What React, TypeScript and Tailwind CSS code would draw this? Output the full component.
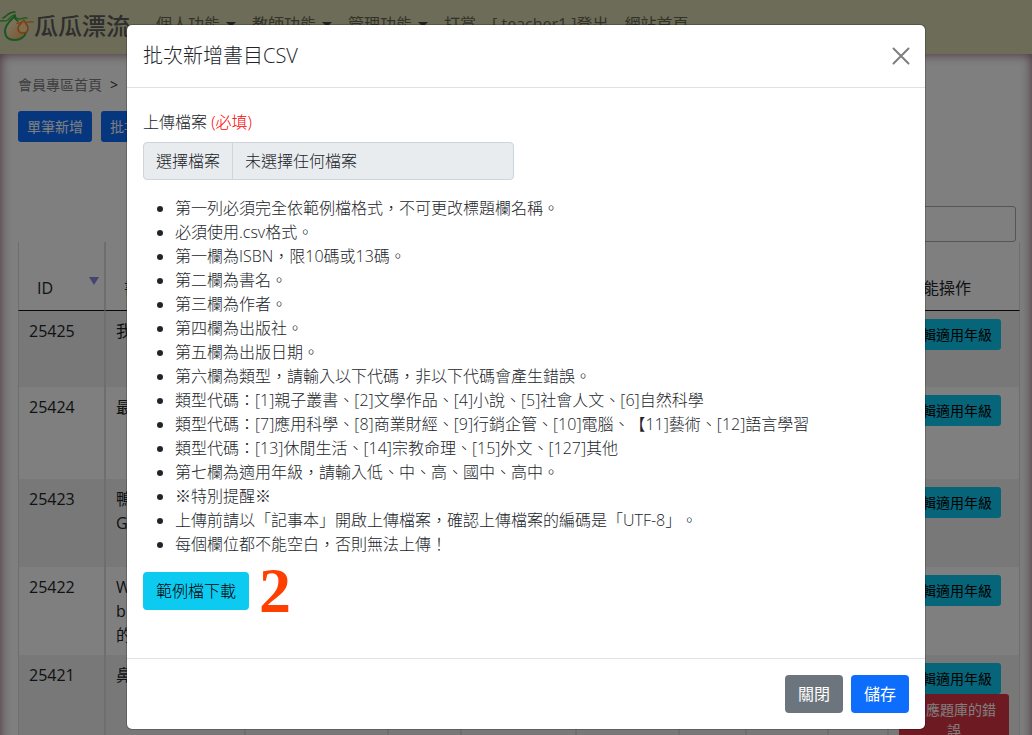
import { useState } from 'react'

const NAV_ITEMS = [
  { label: '個人功能', dropdown: true },
  { label: '教師功能', dropdown: true },
  { label: '管理功能', dropdown: true },
  { label: '打賞', dropdown: false },
  { label: '[ teacher1 ]登出', dropdown: false },
  { label: '網站首頁', dropdown: false },
]

const BOOKS = [
  { id: '25425', title: '我', height: 'h-[76px]' },
  { id: '25424', title: '最', height: 'h-[92px]' },
  { id: '25423', title: '鴨 G', height: 'h-[88px]' },
  { id: '25422', title: 'W b 的', height: 'h-[88px]' },
  { id: '25421', title: '鼻', height: 'h-[92px]', report: true },
]

const RULES = [
  '第一列必須完全依範例檔格式，不可更改標題欄名稱。',
  '必須使用.csv格式。',
  '第一欄為ISBN，限10碼或13碼。',
  '第二欄為書名。',
  '第三欄為作者。',
  '第四欄為出版社。',
  '第五欄為出版日期。',
  '第六欄為類型，請輸入以下代碼，非以下代碼會產生錯誤。',
  '類型代碼：[1]親子叢書、[2]文學作品、[4]小說、[5]社會人文、[6]自然科學',
  '類型代碼：[7]應用科學、[8]商業財經、[9]行銷企管、[10]電腦、【11]藝術、[12]語言學習',
  '類型代碼：[13]休閒生活、[14]宗教命理、[15]外文、[127]其他',
  '第七欄為適用年級，請輸入低、中、高、國中、高中。',
  '※特別提醒※',
  '上傳前請以「記事本」開啟上傳檔案，確認上傳檔案的編碼是「UTF-8」。',
  '每個欄位都不能空白，否則無法上傳！',
]

function Logo() {
  return (
    <svg viewBox="0 0 34 34" className="w-[34px] h-[34px] shrink-0" fill="none" strokeLinecap="round" strokeLinejoin="round" aria-hidden="true">
      <defs>
        <linearGradient id="melon" x1="0" y1="0" x2="1" y2="1">
          <stop offset="0" stopColor="#fffbe0" />
          <stop offset="1" stopColor="#f0a850" />
        </linearGradient>
      </defs>
      {/* big melon */}
      <path d="M14 8C10 12 5 16 5 22c0 6 4 9 10 9s12-4 12-10c0-4-3-6-6-9l-5-2z" fill="url(#melon)" />
      <path d="M14 8C10 12 5 16 5 22c0 6 4 9 10 9 5 0 10-3 11-8" stroke="#2fb04a" strokeWidth="2" />
      {/* vine */}
      <path d="M0 12c3-1 5 1 8-1 2-2 4-5 7-5 0 3 3 4 5 4 3 0 4-2 7-1" stroke="#45b83c" strokeWidth="1.5" />
      <path d="M3 9c3-1 5-6 12-6M15 6c-1 3 1 5 3 6" stroke="#2fa03c" strokeWidth="1.5" />
      {/* small melon */}
      <path d="M24 11c-1 3-6 4-6 8 0 3 2 5 5 5s5-2 5-5c0-3-3-4-4-8z" fill="#ffd890" stroke="#ee7c2c" strokeWidth="1.5" />
      <path d="M17 14c3 1 4-1 7-2 2 3 5 0 9 1" stroke="#f0922c" strokeWidth="1.5" />
    </svg>
  )
}

function Navbar() {
  return (
    <header className="flex h-[54px] items-start bg-[#d9d8b0]">
      <a href="#home" className="flex items-center pt-2 text-2xl leading-9 font-medium text-[#5c5c5c]">
        <Logo />
        <span className="whitespace-nowrap">瓜瓜漂流</span>
      </a>
      <nav className="flex pt-3 pl-[18px]">
        {NAV_ITEMS.map((item) => (
          <a key={item.label} href="#nav" className="flex items-center px-2 text-[#66654f] whitespace-nowrap">
            {item.label}
            {item.dropdown && (
              <span className="ml-[6px] border-x-5 border-t-5 border-x-transparent border-t-[#444]" />
            )}
          </a>
        ))}
      </nav>
    </header>
  )
}

function BookTable() {
  return (
    <table className="w-full table-fixed border-separate border-spacing-0 text-left text-[#212529] [&_td]:border-x [&_td]:border-[#dcdcdc] [&_th]:border-x [&_th]:border-[#dcdcdc]">
      <colgroup>
        <col className="w-[87px]" />
        <col className="w-[140px]" />
        <col className="w-[143px]" />
        <col className="w-[73px]" />
        <col className="w-[115px]" />
        <col className="w-[103px]" />
        <col className="w-[67px]" />
        <col className="w-[82px]" />
        <col className="w-[60px]" />
        <col />
      </colgroup>
      <thead>
        <tr className="h-[69px] align-bottom [&_th]:border-b [&_th]:border-b-[#111] [&_th]:px-[18px] [&_th]:pb-[10px] [&_th]:font-normal">
          <th className="relative">
            ID
            <svg viewBox="0 0 10 8" className="absolute right-[5px] bottom-[25px] h-2 w-[10px]" aria-hidden="true">
              <path d="M0 0h10L5 8z" fill="#8c88e0" />
            </svg>
          </th>
          <th>書名</th>
          <th />
          <th />
          <th />
          <th />
          <th />
          <th />
          <th />
          <th className="whitespace-nowrap">功能操作</th>
        </tr>
      </thead>
      <tbody>
        {BOOKS.map((book) => (
          <tr key={book.id} className={`${book.height} align-top odd:bg-[#f0f0f0] [&_td]:px-[10px] [&_td]:py-2`}>
            <td>{book.id}</td>
            <td>
              {book.title.split(' ').map((line) => (
                <div key={line}>{line}</div>
              ))}
            </td>
            <td />
            <td />
            <td />
            <td />
            <td />
            <td />
            <td />
            <td>
              <button className="block rounded-[3px] bg-[#0dcaf0] px-[9px] py-[5px] text-sm leading-[21px] whitespace-nowrap text-black">
                編輯適用年級
              </button>
              {book.report && (
                <button className="block w-full rounded-[3px] bg-[#dc3545] px-[9px] py-[5px] text-sm leading-[21px] text-white">
                  反應題庫的錯誤
                </button>
              )}
            </td>
          </tr>
        ))}
      </tbody>
    </table>
  )
}

function UploadModal({ onClose }: { onClose: () => void }) {
  const [fileName, setFileName] = useState('')

  return (
    <div className="absolute inset-0 z-20 overflow-hidden pt-6 pl-5">
      <div role="dialog" aria-labelledby="modal-title" className="mx-auto w-full max-w-[800px] rounded-md border border-black/20 bg-white bg-clip-padding font-light text-[#212529]">
        <div className="flex items-center justify-between border-b border-[#dee2e6] p-4">
          <h5 id="modal-title" className="text-xl leading-[30px]">批次新增書目CSV</h5>
          <button onClick={onClose} aria-label="關閉視窗" className="opacity-50">
            <svg viewBox="0 0 16 16" className="h-4 w-4 overflow-visible" stroke="#000" strokeWidth="2" strokeLinecap="round">
              <path d="M0.5 0.5l15 15M15.5 0.5l-15 15" />
            </svg>
          </button>
        </div>

        <div className="px-4 pt-[22px] pb-12">
          <label htmlFor="csv-file" className="mb-2 block">
            上傳檔案 <span className="text-[#f00]">(必填)</span>
          </label>
          <input
            id="csv-file"
            type="file"
            accept=".csv"
            className="sr-only"
            onChange={(e) => setFileName(e.target.files?.[0]?.name ?? '')}
          />
          <label htmlFor="csv-file" className="flex w-[371px] max-w-full rounded border border-[#ced4da] bg-[#e9ecef]">
            <span className="border-r border-[#ced4da] px-3 py-[6px]">選擇檔案</span>
            <span className="px-3 py-[6px]">{fileName || '未選擇任何檔案'}</span>
          </label>

          <ul className="my-4 list-disc pl-8 [text-spacing-trim:space-all]">
            {RULES.map((rule) => (
              <li key={rule}>{rule}</li>
            ))}
          </ul>

          <div className="flex h-[38px] items-center gap-[10px]">
            <a href="#sample" className="rounded bg-[#0dcaf0] px-[13px] py-[7px] text-black">
              範例檔下載
            </a>
            <span className="font-['Liberation_Serif',serif] text-[64px] leading-[38px] font-bold text-[#ff3f00]">2</span>
          </div>
        </div>

        <div className="flex justify-end gap-2 border-t border-[#dee2e6] p-4 font-normal text-white">
          <button onClick={onClose} className="rounded bg-[#6c757d] px-[13px] py-[7px]">關閉</button>
          <button className="rounded bg-[#0d6efd] px-[13px] py-[7px]">儲存</button>
        </div>
      </div>
    </div>
  )
}

export default function App() {
  const [open, setOpen] = useState(true)

  return (
    <div className="relative h-screen overflow-hidden bg-white font-['Open_Sans','Noto_Sans_CJK_TC',sans-serif] text-base leading-6">
      <Navbar />
      <main className="min-h-screen pt-5 pr-3 pl-[18px] shadow-[inset_0_0_12px_#8a5c6c]">
        <div className="flex gap-2 text-sm leading-[21px] text-[#808080]">
          <a href="#member">會員專區首頁</a>
          <span className="text-[#333]">&gt;</span>
        </div>
        <div className="mt-4 flex gap-[9px] text-sm leading-[21px] text-white">
          <button className="rounded-[3px] bg-[#0d6efd] px-[9px] py-[5px]">單筆新增</button>
          <button onClick={() => setOpen(true)} className="rounded-[3px] bg-[#0d6efd] px-[9px] py-[5px]">批次新增</button>
        </div>
        <div className="mt-16 flex justify-end pr-1">
          <input type="search" aria-label="搜尋" className="h-9 w-[200px] rounded-[3px] border border-[#aaa] px-[5px]" />
        </div>
        <BookTable />
      </main>

      {open && (
        <>
          <div className="absolute inset-0 z-10 bg-black/50" />
          <UploadModal onClose={() => setOpen(false)} />
        </>
      )}
    </div>
  )
}
